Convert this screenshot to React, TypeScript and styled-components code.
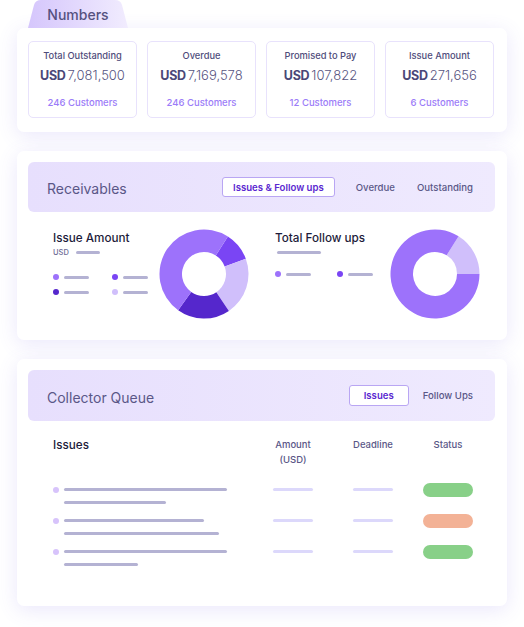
import React from 'react';
import styled, {createGlobalStyle} from "styled-components";

const GlobalStyle = createGlobalStyle`
    body {
        margin: 0;
        background: #ffffff;
        font-family: Inter, "Noto Sans", sans-serif;
    }
`

type statType = {
    title: string,
    amount: string,
    customers: string,
}

type segmentType = {
    from: number,
    to: number,
    color: string,
}

const stats: statType[] = [
    {title: "Total Outstanding", amount: "7,081,500", customers: "246 Customers"},
    {title: "Overdue", amount: "7,169,578", customers: "246 Customers"},
    {title: "Promised to Pay", amount: "107,822", customers: "12 Customers"},
    {title: "Issue Amount", amount: "271,656", customers: "6 Customers"},
]

const issueRows = [
    {first: 163, second: 102, status: "#88d088"},
    {first: 140, second: 155, status: "#f3b296"},
    {first: 163, second: 74, status: "#88d088"},
]

const colors = {
    medium: "#9d72fb",
    violet: "#7a45f4",
    deep: "#5527cc",
    light: "#d0bffb",
}

const point = (radius: number, angle: number) => {
    const a = (angle * Math.PI) / 180;
    return `${45 + radius * Math.sin(a)} ${45 - radius * Math.cos(a)}`;
}

const arcPath = (seg: segmentType) => {
    const R = 44.5;
    const r = 22;
    const large = seg.to - seg.from > 180 ? 1 : 0;
    return `M ${point(R, seg.from)} A ${R} ${R} 0 ${large} 1 ${point(R, seg.to)} L ${point(r, seg.to)} A ${r} ${r} 0 ${large} 0 ${point(r, seg.from)} Z`;
}

const Donut = (props: { segments: segmentType[] }) => {
    return (
        <DonutSvg viewBox="0 0 90 90">
            {props.segments.map((s, i) => <path key={i} d={arcPath(s)} fill={s.color}/>)}
        </DonutSvg>
    );
};

const Legend = (props: { dots: string[], column: number, offset: number }) => {
    return (
        <LegendGrid column={props.column} offset={props.offset}>
            {props.dots.map((c, i) => (
                <LegendItem key={i}>
                    <Dot color={c}/>
                    <Bar width={25}/>
                </LegendItem>
            ))}
        </LegendGrid>
    );
};

export default function App() {
    return (
        <Page>
            <GlobalStyle/>
            <div>
                <NumbersTab>Numbers</NumbersTab>
                <Card>
                    <StatsGrid>
                        {stats.map(s => (
                            <StatBox key={s.title}>
                                <StatTitle>{s.title}</StatTitle>
                                <StatAmount><b>USD</b>{s.amount}</StatAmount>
                                <StatCustomers>{s.customers}</StatCustomers>
                            </StatBox>
                        ))}
                    </StatsGrid>
                </Card>
            </div>

            <Card>
                <Band>
                    <BandTitle>Receivables</BandTitle>
                    <Tabs>
                        <Tab active space={10}>Issues &amp; Follow ups</Tab>
                        <Tab>Overdue</Tab>
                        <Tab>Outstanding</Tab>
                    </Tabs>
                </Band>
                <Charts>
                    <ChartColumn>
                        <ChartInfo>
                            <ChartTitle>Issue Amount</ChartTitle>
                            <Currency>USD <Bar width={24}/></Currency>
                            <Legend column={59} offset={16}
                                    dots={[colors.medium, colors.violet, colors.deep, colors.light]}/>
                        </ChartInfo>
                        <Donut segments={[
                            {from: 32.5, to: 70, color: colors.violet},
                            {from: 70, to: 146, color: colors.light},
                            {from: 146, to: 215.5, color: colors.deep},
                            {from: 215.5, to: 392.5, color: colors.medium},
                        ]}/>
                    </ChartColumn>
                    <ChartColumn>
                        <ChartInfo>
                            <ChartTitle>Total Follow ups</ChartTitle>
                            <SubBar><Bar width={44}/></SubBar>
                            <Legend column={62} offset={13} dots={[colors.medium, colors.violet]}/>
                        </ChartInfo>
                        <Donut segments={[
                            {from: 32, to: 90, color: colors.light},
                            {from: 90, to: 392, color: colors.medium},
                        ]}/>
                    </ChartColumn>
                </Charts>
            </Card>

            <Card>
                <Band tall>
                    <BandTitle>Collector Queue</BandTitle>
                    <Tabs>
                        <Tab active wide space={3}>Issues</Tab>
                        <Tab>Follow Ups</Tab>
                    </Tabs>
                </Band>
                <Table>
                    <IssuesHead>Issues</IssuesHead>
                    <ColumnHead>Amount<br/>(USD)</ColumnHead>
                    <ColumnHead>Deadline</ColumnHead>
                    <ColumnHead>Status</ColumnHead>
                    {issueRows.map((row, i) => (
                        <React.Fragment key={i}>
                            <IssueCell>
                                <Dot color="#d7c3fb"/>
                                <IssueLines>
                                    <Bar width={row.first}/>
                                    <Bar width={row.second}/>
                                </IssueLines>
                            </IssueCell>
                            <Cell><Bar width={40} light/></Cell>
                            <Cell><Bar width={40} light/></Cell>
                            <Cell><StatusPill color={row.status}/></Cell>
                        </React.Fragment>
                    ))}
                </Table>
            </Card>
        </Page>
    );
}

const Page = styled.div`
    width: 490px;
    padding: 0 17px 21px;
    display: flex;
    flex-direction: column;
    gap: 19px;
`

const NumbersTab = styled.div`
    width: 100px;
    height: 28px;
    margin-left: 11px;
    display: flex;
    align-items: center;
    justify-content: center;
    font-size: 14px;
    font-weight: 500;
    color: #55517f;
    background: linear-gradient(90deg, #d5c6fc, #f1ecfe);
    clip-path: path('M0 28 L6 5 Q7.5 0 13 0 L87 0 Q92.5 0 94 5 L100 28 Z');
`

const Card = styled.div`
    background: #ffffff;
    border-radius: 7px;
    box-shadow: 0 4px 20px rgba(105, 85, 230, 0.14);
    padding: 11px 12px 11px 11px;
`

const StatsGrid = styled.div`
    display: grid;
    grid-template-columns: repeat(4, 1fr);
    gap: 10px;
    padding: 2px 1px 3px 0;
`

const StatBox = styled.div`
    height: 77px;
    box-sizing: border-box;
    border: 1px solid #e8e2fc;
    border-radius: 5px;
    padding-top: 8px;
    display: flex;
    flex-direction: column;
    align-items: center;
`

const StatTitle = styled.div`
    font-size: 9.3px;
    line-height: 12px;
    font-weight: 500;
    color: #4f4c7b;
`

const StatAmount = styled.div`
    margin-top: 5px;
    line-height: 16px;
    font-size: 13px;
    font-weight: 300;
    color: #57547f;
    display: flex;
    align-items: baseline;
    gap: 2px;

    b {
        font-weight: 700;
        font-size: 12.5px;
        color: #4a4778;
        letter-spacing: -0.3px;
    }
`

const StatCustomers = styled.div`
    margin-top: 13px;
    font-size: 9.5px;
    line-height: 12px;
    font-weight: 500;
    color: #9c7cf8;
`

const Band = styled.div<{ tall?: boolean }>`
    height: ${p => p.tall ? 51 : 50}px;
    border-radius: 6px;
    background: linear-gradient(90deg, #e7dffd, #efeafe);
    display: flex;
    align-items: center;
    justify-content: space-between;
    padding: 0 11px 0 19px;
`

const BandTitle = styled.div`
    font-size: 14px;
    color: #5a5787;
    margin-top: 3px;
`

const Tabs = styled.div`
    display: flex;
    align-items: center;
`

const Tab = styled.div<{ active?: boolean, wide?: boolean, space?: number }>`
    height: ${p => p.wide ? 21 : 20}px;
    box-sizing: border-box;
    display: flex;
    align-items: center;
    padding: 0 ${p => p.wide ? 14 : 10}px;
    margin-right: ${p => p.space ?? 0}px;
    font-size: 9.6px;
    font-weight: ${p => p.active ? 600 : 500};
    color: ${p => p.active ? "#5a27d0" : "#5a5787"};
    background: ${p => p.active ? "#ffffff" : "transparent"};
    border: 1px solid ${p => p.active ? "#b9a6f3" : "transparent"};
    border-radius: 3px;
`

const Charts = styled.div`
    display: grid;
    grid-template-columns: 196px 1fr;
    column-gap: 26px;
    padding: 17px 15px 10px 25px;
`

const ChartColumn = styled.div`
    display: flex;
    justify-content: space-between;
`

const ChartInfo = styled.div`
    padding-top: 1px;
`

const ChartTitle = styled.div`
    font-size: 11.7px;
    line-height: 16px;
    font-weight: 500;
    color: #1d1b3a;
`

const Currency = styled.div`
    margin-top: 1px;
    height: 10px;
    display: flex;
    align-items: center;
    gap: 7px;
    font-size: 7.5px;
    font-weight: 500;
    color: #6e6b95;
`

const SubBar = styled.div`
    margin-top: 1px;
    height: 10px;
    display: flex;
    align-items: center;
    padding-left: 2px;
`

const LegendGrid = styled.div<{ column: number, offset: number }>`
    margin-top: ${p => p.offset}px;
    display: grid;
    grid-template-columns: ${p => p.column}px auto;
    row-gap: 7px;
`

const LegendItem = styled.div`
    height: 8px;
    display: flex;
    align-items: center;
    gap: 5px;
`

const Dot = styled.span<{ color: string }>`
    width: 6px;
    height: 6px;
    border-radius: 50%;
    background: ${p => p.color};
    flex-shrink: 0;
`

const Bar = styled.span<{ width: number, light?: boolean }>`
    display: block;
    width: ${p => p.width}px;
    height: 3px;
    border-radius: 2px;
    background: ${p => p.light ? "#dcd8fb" : "#b4b2d3"};
`

const DonutSvg = styled.svg`
    width: 90px;
    height: 90px;
    display: block;
`

const Table = styled.div`
    display: grid;
    grid-template-columns: 200px 80px 80px 70px;
    padding: 17px 12px 29px 25px;
    row-gap: 15px;
`

const IssuesHead = styled.div`
    font-size: 11.7px;
    line-height: 15px;
    font-weight: 500;
    color: #1d1b3a;
    margin-bottom: 6px;
`

const ColumnHead = styled.div`
    text-align: center;
    font-size: 9.5px;
    line-height: 14.5px;
    font-weight: 500;
    color: #5a5787;
    margin-bottom: 6px;
`

const IssueCell = styled.div`
    display: flex;
    align-items: flex-start;
    gap: 5px;

    ${Dot} {
        margin-top: -1.5px;
    }
`

const IssueLines = styled.div`
    display: flex;
    flex-direction: column;
    gap: 10px;
`

const Cell = styled.div`
    display: flex;
    justify-content: center;
    align-items: flex-start;
`

const StatusPill = styled.span<{ color: string }>`
    width: 50px;
    height: 14px;
    margin-top: -5.5px;
    border-radius: 7px;
    background: ${p => p.color};
`
